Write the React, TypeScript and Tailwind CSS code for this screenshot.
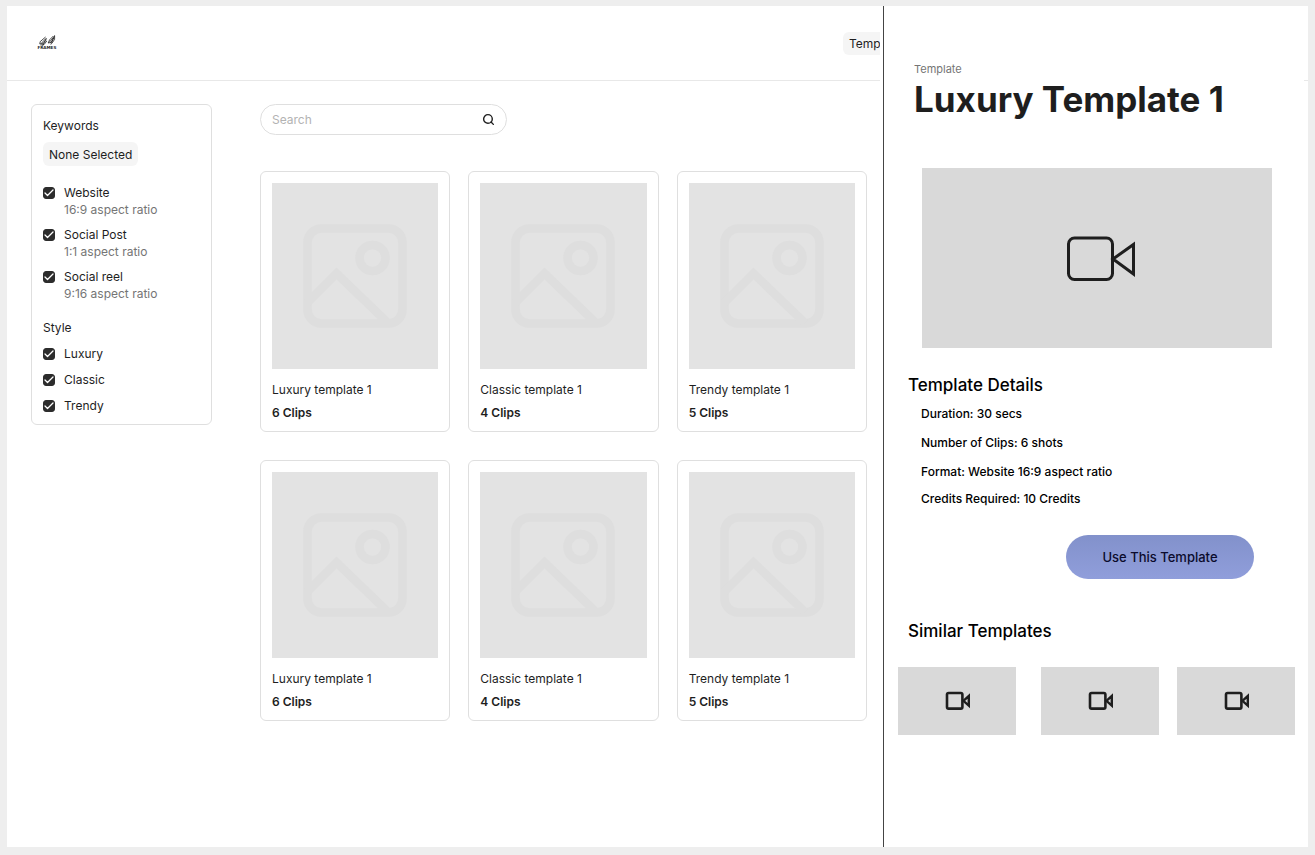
import React from 'react';
import { Check, Search } from 'lucide-react';

type Option = { id: string; label: string; hint?: string };

const keywords: Option[] = [
  { id: 'website', label: 'Website', hint: '16:9 aspect ratio' },
  { id: 'social-post', label: 'Social Post', hint: '1:1 aspect ratio' },
  { id: 'social-reel', label: 'Social reel', hint: '9:16 aspect ratio' },
];

const styles: Option[] = [
  { id: 'luxury', label: 'Luxury' },
  { id: 'classic', label: 'Classic' },
  { id: 'trendy', label: 'Trendy' },
];

const templates = [
  { name: 'Luxury template 1', clips: '6 Clips' },
  { name: 'Classic template 1', clips: '4 Clips' },
  { name: 'Trendy template 1', clips: '5 Clips' },
  { name: 'Luxury template 1', clips: '6 Clips' },
  { name: 'Classic template 1', clips: '4 Clips' },
  { name: 'Trendy template 1', clips: '5 Clips' },
];

const details = ['Duration: 30 secs', 'Number of Clips: 6 shots', 'Format: Website 16:9 aspect ratio'];

function Logo() {
  return (
    <svg className="h-4 w-5" viewBox="0 0 20 16" fill="none" stroke="#1e1e1e">
      <g strokeWidth="0.8">
        <path d="M8.6 2 3.2 6.6 2.8 9 6.2 8.2 9.6 4.8M9.4 3 5.6 10.8M4.6 8 8.6 3.8M3.4 10 7 9.6 9.8 6" />
        <path d="M16.4 1 12.6 4.8 11.2 8 14 7.4 16.8 3M17.6 0.4 13.8 9.6M12.4 7.2 16.4 2.4M14.8 8.4 17.6 4.4 17.6 0.8" />
      </g>
      <text x="0.4" y="14.4" fontSize="4.1" fontWeight="700" fontFamily="DejaVu Sans, sans-serif" fill="#1e1e1e" stroke="none">
        FRAMES
      </text>
    </svg>
  );
}

function ImageIcon() {
  return (
    <svg className="w-[104px]" viewBox="0 0 104 104" fill="none" stroke="#dedede" strokeWidth="8.6">
      <rect x="4.5" y="4.5" width="95" height="95" rx="14" />
      <circle cx="69.5" cy="34" r="13" />
      <path d="M4.5 78.5 33.5 49.5 85 99" />
    </svg>
  );
}

function LargeVideoIcon() {
  return (
    <svg className="h-[50px] w-[78px]" viewBox="-8 -2 78 50" fill="none" stroke="#1e1e1e" strokeWidth="3">
      <rect x="2.5" y="3" width="44" height="41.5" rx="6" />
      <path d="M47 24 67.5 9.5v29.5z" />
    </svg>
  );
}

function SmallVideoIcon() {
  return (
    <svg className="h-5 w-7" viewBox="-2 0 28 20" fill="none" stroke="#1e1e1e" strokeWidth="2.6">
      <rect x="2" y="2" width="15.4" height="15.6" rx="1.6" />
      <path d="M18.4 9.8 23.8 5v9.6z" strokeWidth="2.4" />
    </svg>
  );
}

function CheckOption({ option }: { option: Option }) {
  return (
    <label htmlFor={option.id} className="flex items-start gap-[9px]">
      <span className="mt-[3px] grid h-3 w-3 shrink-0">
        <input
          id={option.id}
          type="checkbox"
          defaultChecked
          className="peer col-start-1 row-start-1 h-3 w-3 appearance-none rounded-[3px] border border-[#2c2c2c] checked:bg-[#2c2c2c]"
        />
        <Check className="pointer-events-none invisible col-start-1 row-start-1 h-3 w-3 text-white peer-checked:visible" strokeWidth={2.6} />
      </span>
      <span className="block">
        <span className="block">{option.label}</span>
        {option.hint && <span className="block text-[#757575]">{option.hint}</span>}
      </span>
    </label>
  );
}

export default function App() {
  return (
    <div className="min-h-screen bg-[#eeeeee] pt-1.5 pr-[7px] pb-2 pl-[7px] font-['Inter',sans-serif] text-[12px] leading-[17px] text-[#1e1e1e]">
      <div className="relative min-h-[calc(100vh-14px)] bg-white">
        <header className="flex h-[75px] items-center justify-between border-b border-[#e8e8e8] pr-6 pl-[30px]">
          <a href="#" aria-label="Frames home">
            <Logo />
          </a>
          <nav className="w-[441px]">
            <a href="#" className="inline-block rounded-md bg-[#f5f5f5] px-1.5 py-[3px]">
              Templates
            </a>
          </nav>
        </header>

        <div className="flex items-start gap-12 pt-[23px] pr-[441px] pl-6">
          <section className="w-[181px] shrink-0 rounded-md border border-[#dfdfdf] px-[11px] pt-3 pb-[10px]">
            <h2>Keywords</h2>
            <button type="button" className="mt-2 h-6 rounded-md bg-[#f5f5f5] px-1.5">
              None Selected
            </button>
            <div className="mt-[18px] flex flex-col gap-2">
              {keywords.map((k) => (
                <CheckOption key={k.id} option={k} />
              ))}
            </div>
            <h2 className="mt-[17px]">Style</h2>
            <div className="mt-[9px] flex flex-col gap-[9px]">
              {styles.map((s) => (
                <CheckOption key={s.id} option={s} />
              ))}
            </div>
          </section>

          <main className="min-w-0 flex-1">
            <div className="flex h-[31px] w-[247px] items-center rounded-full border border-[#dfdfdf] px-[11px]">
              <input
                type="search"
                aria-label="Search"
                placeholder="Search"
                className="min-w-0 flex-1 bg-transparent outline-none placeholder:text-[#b3b3b3]"
              />
              <Search className="h-[13px] w-[13px]" strokeWidth={2.6} />
            </div>
            <div className="mt-9 grid grid-cols-3 gap-x-[18px] gap-y-7">
              {templates.map((t, i) => (
                <article key={i} className="rounded-md border border-[#dfdfdf] px-[11px] pt-[11px] pb-[10px]">
                  <div className="flex h-[186px] items-center justify-center bg-[#e3e3e3]">
                    <ImageIcon />
                  </div>
                  <h3 className="mt-3">{t.name}</h3>
                  <p className="mt-1.5 font-semibold">{t.clips}</p>
                </article>
              ))}
            </div>
          </main>
        </div>

        <aside className="absolute inset-y-0 right-1 w-[424px] bg-white pl-[3px]">
          <div className="h-full border-l border-[#444444] pt-14 text-black">
            <p className="pl-[30px] text-[11px] leading-[15px] text-[#757575]">Template</p>
            <h1 className="pl-[30px] text-[35px] leading-[44px] font-bold text-[#1e1e1e]">Luxury Template 1</h1>
            <div className="mt-[47px] mr-8 ml-[38px] flex h-[180px] items-center justify-center bg-[#d9d9d9]">
              <LargeVideoIcon />
            </div>
            <h2 className="mt-[25px] pl-6 text-[17px] leading-6 font-medium">Template Details</h2>
            <ul className="mt-2 flex flex-col gap-3 pl-[37px] font-medium">
              {details.map((d) => (
                <li key={d}>{d}</li>
              ))}
            </ul>
            <p className="mt-[10px] pl-[37px] font-medium">Credits Required: 10 Credits</p>
            <div className="mt-7 flex justify-end pr-[50px]">
              <button
                type="button"
                className="h-11 w-[188px] rounded-full bg-linear-to-b from-[#8291cb] to-[#909edb] text-[13px] font-medium text-[#0b0b2c]"
              >
                Use This Template
              </button>
            </div>
            <h2 className="mt-10 pl-6 text-[17px] leading-6 font-medium">Similar Templates</h2>
            <div className="mt-6 flex gap-[18px] pr-2 pl-[14px]">
              {[0, 1, 2].map((n) => (
                <div key={n} className="flex h-[68px] w-[118px] items-center justify-center bg-[#d9d9d9] first:mr-[7px]">
                  <SmallVideoIcon />
                </div>
              ))}
            </div>
          </div>
        </aside>
      </div>
    </div>
  );
}
